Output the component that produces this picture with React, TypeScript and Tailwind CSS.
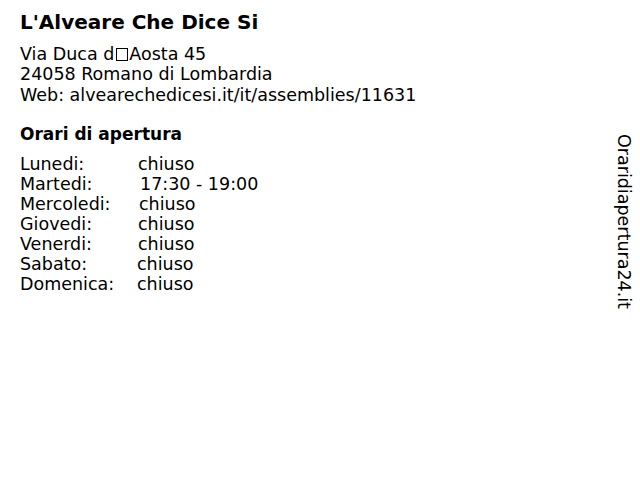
export default function App() {
  const rows: [string, string, string][] = [
    ["Lunedi:", "chiuso", "pl-[118px]"],
    ["Martedi:", "17:30 - 19:00", "pl-[120px]"],
    ["Mercoledi:", "chiuso", "pl-[119px]"],
    ["Giovedi:", "chiuso", "pl-[118px]"],
    ["Venerdi:", "chiuso", "pl-[118px]"],
    ["Sabato:", "chiuso", "pl-[117px]"],
    ["Domenica:", "chiuso", "pl-[117px]"],
  ];
  return (
    <div className="w-[640px] h-[480px] bg-white text-black flex font-['DejaVu_Sans',sans-serif]">
      <div className="flex-1 pl-[20px] pt-[10px]">
        <div className="text-[20px] leading-[24px] font-bold">L'Alveare Che Dice Si</div>
        <div className="mt-[9.5px] text-[17.5px] leading-[20.5px]">
          <div>
            Via Duca d
            <span className="inline-block w-[12px] h-[13px] border border-black align-[-1px] mx-[1.5px]"></span>
            Aosta 45
          </div>
          <div>24058 Romano di Lombardia</div>
          <div>Web: alvearechedicesi.it/it/assemblies/11631</div>
        </div>
        <div className="mt-[18.5px] text-[17px] leading-[20px] font-bold">Orari di apertura</div>
        <div className="mt-[10px] text-[17.5px] leading-[20px]">
          {rows.map(([d, t, p]) => (
            <div key={d} className="relative h-[20px]">
              <span className="absolute left-0 top-0">{d}</span>
              <span className={"absolute left-0 top-0 " + p}>{t}</span>
            </div>
          ))}
        </div>
      </div>
      <div className="w-[40px] pt-[134px] pl-[14px]">
        <div className="[writing-mode:vertical-rl] text-[17.5px] leading-[20px]">Oraridiapertura24.it</div>
      </div>
    </div>
  );
}
